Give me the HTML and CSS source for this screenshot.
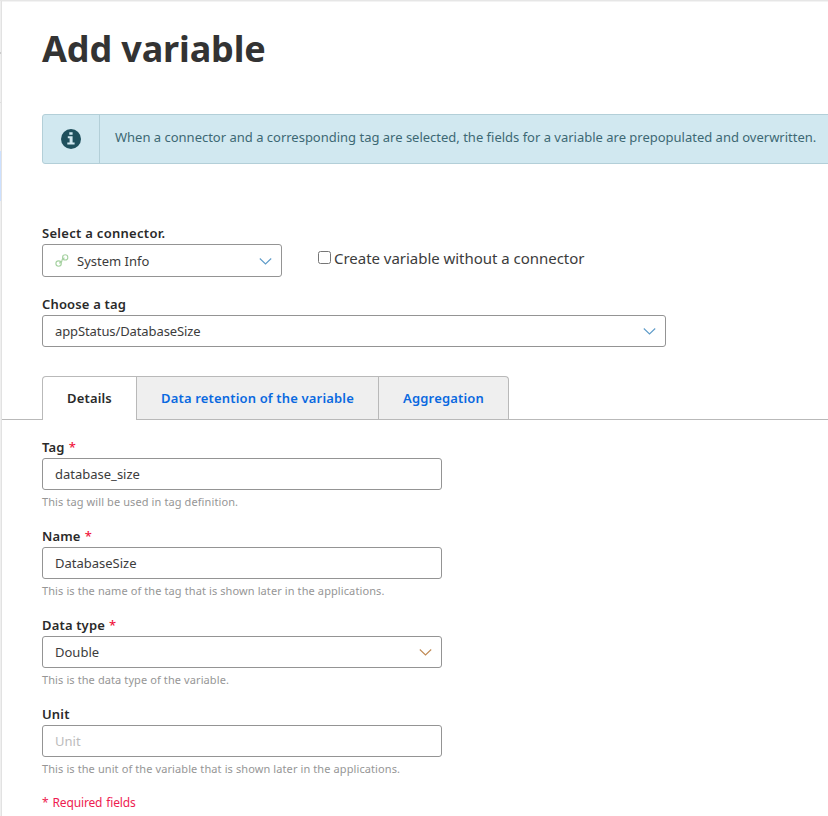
FILE: index.html
```html
<!DOCTYPE html>
<html lang="en">
<head>
<meta charset="utf-8">
<title>Add variable</title>
<link rel="stylesheet" href="styles.css">
</head>
<body>
<div class="shell">
  <aside class="rail"><span class="rail-mark"></span><span class="rail-line"></span><span class="rail-active"></span></aside>
  <main class="panel">
    <h1><span>Add variable</span></h1>
    <div class="alert">
      <div class="alert-icon">
        <svg width="20" height="20" viewBox="0 0 20 20"><circle cx="10" cy="10" r="10" fill="#1f505d"/><path fill="#d1e8f0" d="M8.3 3.2h3.3v2.6H8.3zM6.8 7.3h4.8v6.2h2v2H6.3v-2h2.3V9.2H6.8z"/></svg>
      </div>
      <p class="alert-text"><span>When a connector and a corresponding tag are selected, the fields for a variable are prepopulated and overwritten.</span></p>
    </div>
    <div class="connector-row">
      <div class="group">
        <label class="label label-connector"><span>Select a connector.</span></label>
        <div class="control control-connector">
          <svg class="link" width="14" height="14" viewBox="0 0 14 14" fill="none" stroke="#a5d1a0" stroke-width="1.1"><circle cx="10.2" cy="3.4" r="2.6"/><circle cx="3.6" cy="9.6" r="2.7"/><path d="M4 9C6 9 6.800 8.200 6.900 6.700C7 5.200 8 4.200 9.600 4"/></svg>
          <span class="value">System Info</span>
          <svg class="chevron blue" width="13" height="8" viewBox="0 0 13 8"><path d="M.8 1.500l5.700 5.500L12.200 1.500"/></svg>
        </div>
      </div>
      <label class="check"><input type="checkbox"><span>Create variable without a connector</span></label>
    </div>
    <div class="group group-tag">
      <label class="label"><span>Choose a tag</span></label>
      <div class="control control-tag">
        <span class="value path">appStatus/DatabaseSize</span>
        <svg class="chevron blue" width="13" height="8" viewBox="0 0 13 8"><path d="M.8 1.500l5.700 5.500L12.200 1.500"/></svg>
      </div>
    </div>
    <nav class="tabs">
      <a class="tab tab-details active"><span>Details</span></a>
      <a class="tab tab-retention"><span>Data retention of the variable</span></a>
      <a class="tab tab-aggregation"><span>Aggregation</span></a>
    </nav>
    <form class="fields">
      <div class="field">
        <label class="label"><span>Tag</span> <b>*</b></label>
        <div class="control"><span class="value">database_size</span></div>
        <p class="help"><span>This tag will be used in tag definition.</span></p>
      </div>
      <div class="field">
        <label class="label"><span>Name</span> <b>*</b></label>
        <div class="control"><span class="value">DatabaseSize</span></div>
        <p class="help"><span>This is the name of the tag that is shown later in the applications.</span></p>
      </div>
      <div class="field">
        <label class="label"><span>Data type</span> <b>*</b></label>
        <div class="control">
          <span class="value">Double</span>
          <svg class="chevron orange" width="13" height="8" viewBox="0 0 13 8"><path d="M.8 1.500l5.700 5.500L12.200 1.500"/></svg>
        </div>
        <p class="help"><span>This is the data type of the variable.</span></p>
      </div>
      <div class="field">
        <label class="label"><span>Unit</span></label>
        <div class="control"><span class="value placeholder">Unit</span></div>
        <p class="help"><span>This is the unit of the variable that is shown later in the applications.</span></p>
      </div>
      <p class="required"><span>* Required fields</span></p>
    </form>
  </main>
</div>
</body>
</html>
```
FILE: styles.css
```css
* { box-sizing: border-box; }
html, body { margin: 0; height: 100%; overflow: hidden; }
body { font: 13px/20px "Noto Sans", sans-serif; color: #3c3c3c; background: #fff; }
h1, p { margin: 0; }
span { white-space: nowrap; }

.shell { display: flex; height: 816px; border-top: 1px solid #e6e6e6; }
.rail { flex: 0 0 2px; display: flex; flex-direction: column; background: #efefef; border-right: 1px solid #e2e2e2; }
.rail-mark { height: 2px; margin-top: 51px; background: #ccc; }
.rail-line { height: 1px; margin-top: 48px; background: #ddd; }
.rail-active { height: 50px; margin-top: 48px; background: #cce0ff; }
.panel { flex: 1; min-width: 0; overflow: hidden; border-top: 1px solid #f3f3f3; }

h1 { padding-left: 40px; margin-top: 23px; height: 48px; font-size: 36px; line-height: 48px; font-weight: 700; letter-spacing: -.14px; color: #333; }

.alert { display: flex; width: 800px; height: 50px; margin: 41px 0 0 40px; background: #d1e8f0; border: 1px solid #b3cfd8; border-radius: 3px; color: #3d6874; }
.alert-icon { flex: 0 0 57px; display: flex; align-items: center; justify-content: center; border-right: 1px solid #b3cfd8; }
.alert-text { padding: 12px 0 0 15px; letter-spacing: -.008px; }

.connector-row { display: flex; padding-left: 40px; margin-top: 59px; height: 54px; }
.group { width: 240px; }
.label { display: block; height: 21px; line-height: 20px; font-weight: 600; letter-spacing: .16px; color: #2a2a2a; }
.label-connector { letter-spacing: .29px; }
.label b { margin-left: .5px; color: #f0143c; font-weight: 500; }
.control { display: flex; align-items: center; width: 400px; height: 32px; padding: 0 9px 0 12px; border: 1px solid #949494; border-radius: 3px; background: #fff; }
.control-connector { width: 240px; height: 33px; }
.control-tag { width: 624px; }
.path { letter-spacing: -.1px; }
.link { margin-right: 8px; }
.chevron { margin-left: auto; fill: none; stroke-width: 1.1; }
.blue { stroke: #5f9cc9; }
.orange { stroke: #c08a55; }
.placeholder { color: #bcbcbc; }

.check { display: flex; align-items: flex-start; margin-left: 36px; padding-top: 25px; font-size: 15px; letter-spacing: -.03px; }
.check input { width: 13px; height: 13px; margin: 3px 3px 0 0; }

.group-tag { margin: 17px 0 0 40px; }

.tabs { display: flex; height: 44px; margin-top: 29px; padding-left: 40px; border-bottom: 1px solid #b9b9b9; }
.tab { display: flex; align-items: center; justify-content: center; height: 43px; background: #efefef; border: 1px solid #b9b9b9; border-width: 1px 1px 0 0; color: #0a69e0; font-weight: 600; letter-spacing: .16px; }
.tab.active { height: 44px; padding-bottom: 1px; background: #fff; color: #2a2a2a; border-left-width: 1px; border-top-left-radius: 4px; }
.tab-details { width: 95px; }
.tab-retention { width: 242px; }
.tab-aggregation { width: 130px; border-top-right-radius: 4px; }

.fields { padding: 17px 0 0 40px; }
.field { height: 89px; }
.help { height: 20px; margin-top: 2px; font-size: 11px; letter-spacing: .1px; color: #969696; }
.required { color: #ee1c50; font-size: 12px; word-spacing: 1px; letter-spacing: -.14px; }
```
